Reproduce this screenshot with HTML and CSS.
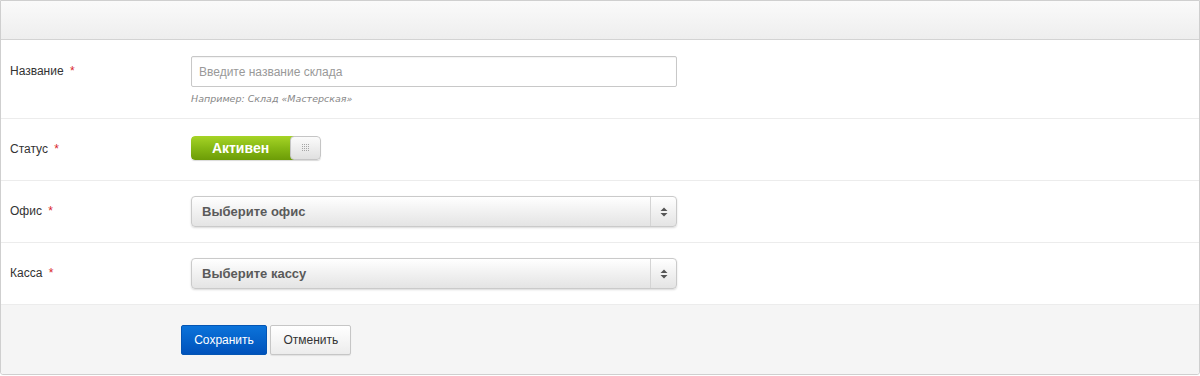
FILE: index.html
```html
<!DOCTYPE html>
<html lang="ru">
<head>
    <meta charset="UTF-8">
    <meta name="viewport" content="width=device-width, initial-scale=1.0">
    <title>Склад</title>
    <link rel="stylesheet" href="styles.css">
</head>
<body>
    <div class="panel">
        <div class="panel-head"></div>

        <div class="row row-first">
            <label class="row-label" for="name">Название <span class="req">*</span></label>
            <div class="row-field">
                <input type="text" id="name" class="text-input" placeholder="Введите название склада">
                <div class="hint">Например: Склад «Мастерская»</div>
            </div>
        </div>

        <div class="row row-status">
            <div class="row-label toggle-label">Статус <span class="req">*</span></div>
            <div class="row-field">
                <div class="toggle">
                    <span class="toggle-on">Активен</span>
                    <span class="toggle-knob">
                        <svg class="grip" width="8" height="8" viewBox="0 0 8 8" fill="#a5a5a5">
                            <rect x="0" y="0" width="1" height="1"/><rect x="2" y="0" width="1" height="1"/><rect x="4" y="0" width="1" height="1"/><rect x="6" y="0" width="1" height="1"/>
                            <rect x="0" y="2" width="1" height="1"/><rect x="2" y="2" width="1" height="1"/><rect x="4" y="2" width="1" height="1"/><rect x="6" y="2" width="1" height="1"/>
                            <rect x="0" y="4" width="1" height="1"/><rect x="2" y="4" width="1" height="1"/><rect x="4" y="4" width="1" height="1"/><rect x="6" y="4" width="1" height="1"/>
                            <rect x="0" y="6" width="1" height="1"/><rect x="2" y="6" width="1" height="1"/><rect x="4" y="6" width="1" height="1"/><rect x="6" y="6" width="1" height="1"/>
                        </svg>
                    </span>
                </div>
            </div>
        </div>

        <div class="row">
            <label class="row-label" for="office">Офис <span class="req">*</span></label>
            <div class="row-field">
                <div class="select" id="office">
                    <span class="select-text">Выберите офис</span>
                    <span class="select-arrow">
                        <svg width="8" height="10" viewBox="0 0 8 10"><path d="M4 0.5 L7.5 4 H0.5 Z M4 9.5 L7.5 6 H0.5 Z" fill="#555"/></svg>
                    </span>
                </div>
            </div>
        </div>

        <div class="row">
            <label class="row-label" for="cash">Касса <span class="req">*</span></label>
            <div class="row-field">
                <div class="select" id="cash">
                    <span class="select-text">Выберите кассу</span>
                    <span class="select-arrow">
                        <svg width="8" height="10" viewBox="0 0 8 10"><path d="M4 0.5 L7.5 4 H0.5 Z M4 9.5 L7.5 6 H0.5 Z" fill="#555"/></svg>
                    </span>
                </div>
            </div>
        </div>

        <div class="panel-foot">
            <button class="btn btn-primary">Сохранить</button>
            <button class="btn btn-default">Отменить</button>
        </div>
    </div>
</body>
</html>
```

FILE: styles.css
```css
body {
    margin: 0;
    font-family: 'Liberation Sans', Arial, sans-serif;
    font-size: 12px;
    color: #333;
    background-color: #fff;
}
.panel {
    width: 1198px;
    border: 1px solid #cfcfcf;
    border-radius: 0 0 3px 3px;
    background-color: #fff;
}
.panel-head {
    height: 38px;
    background: linear-gradient(to bottom, #fafafa, #eeeeee);
    border-bottom: 1px solid #d3d3d3;
}
.row {
    display: flex;
    align-items: flex-start;
    padding: 15px 0 15px 9px;
    border-bottom: 1px solid #ececec;
}
.row-first {
    padding-top: 16px;
    padding-bottom: 12px;
}
.row-status {
    padding-top: 17px;
    padding-bottom: 19px;
}
.row-label {
    width: 181px;
    line-height: 31px;
    font-size: 12px;
    color: #333;
}
.toggle-label {
    padding-top: 1px;
    line-height: 24px;
}
.req {
    color: #d9262c;
    margin-left: 3px;
}
.row-field {
    width: 486px;
}
.text-input {
    display: block;
    box-sizing: border-box;
    width: 486px;
    height: 31px;
    padding: 0 7px;
    border: 1px solid #c8c8c8;
    border-radius: 2px;
    font-family: inherit;
    font-size: 12px;
    color: #333;
    box-shadow: inset 0 1px 1px rgba(0, 0, 0, 0.05);
}
.text-input::placeholder {
    color: #999;
}
.hint {
    margin-top: 5px;
    font-family: 'DejaVu Sans', Verdana, sans-serif;
    font-size: 9.5px;
    font-style: italic;
    color: #888;
    line-height: 14px;
}
.toggle {
    display: flex;
    width: 130px;
    height: 24px;
    border-radius: 4px;
    overflow: hidden;
    box-shadow: 0 1px 1px rgba(0, 0, 0, 0.15);
}
.toggle-on {
    flex: 1;
    padding-right: 4px;
    line-height: 24px;
    text-align: center;
    font-size: 14px;
    font-weight: bold;
    color: #fff;
    background: linear-gradient(to bottom, #a6d426 0%, #86b814 50%, #6c9c07 100%);
    border-radius: 4px 0 0 4px;
}
.toggle-knob {
    display: flex;
    align-items: center;
    justify-content: center;
    flex: 0 0 31px;
    box-sizing: border-box;
    margin-left: -4px;
    border: 1px solid #c5c5c5;
    border-radius: 4px;
    background: linear-gradient(to bottom, #fbfbfb, #e0e0e0);
}
.select {
    display: flex;
    box-sizing: border-box;
    width: 486px;
    height: 31px;
    border: 1px solid #cacaca;
    border-radius: 4px;
    background: linear-gradient(to bottom, #ffffff 0%, #f1f1f1 50%, #e4e4e4 100%);
    box-shadow: 0 1px 2px rgba(0, 0, 0, 0.15);
}
.select-text {
    flex: 1;
    padding-left: 10px;
    line-height: 29px;
    font-size: 13px;
    font-weight: bold;
    color: #5a5a5a;
}
.select-arrow {
    display: flex;
    align-items: center;
    justify-content: center;
    width: 25px;
    border-left: 1px solid #d4d4d4;
}
.panel-foot {
    padding: 20px 0 19px 180px;
    background-color: #f5f5f5;
    border-radius: 0 0 3px 3px;
}
.btn {
    height: 30px;
    padding: 0 10px;
    border-radius: 2px;
    font-family: inherit;
    font-size: 12px;
    cursor: pointer;
}
.btn-primary {
    width: 86px;
    color: #fff;
    border: 1px solid #0455b3;
    background: linear-gradient(to bottom, #0b73da, #0052bb);
}
.btn-default {
    width: 81px;
    color: #333;
    border: 1px solid #c6c6c6;
    background: linear-gradient(to bottom, #ffffff, #ececec);
    box-shadow: 0 1px 1px rgba(0, 0, 0, 0.08);
}
```
